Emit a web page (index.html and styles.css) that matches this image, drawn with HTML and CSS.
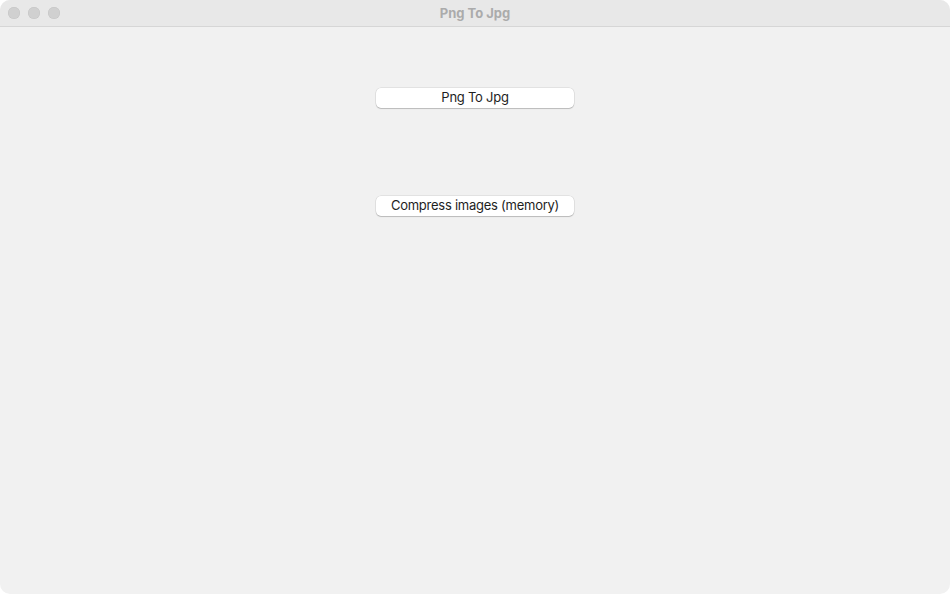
FILE: index.html
```html
<!DOCTYPE html>
<html>
<head>
<meta charset="utf-8">
<link rel="stylesheet" href="styles.css">
</head>
<body>
<div class="window">
  <div class="titlebar">
    <div class="lights">
      <span class="light"></span>
      <span class="light"></span>
      <span class="light"></span>
    </div>
    <div class="title">Png To Jpg</div>
  </div>
  <div class="content">
    <button class="btn btn-first">Png To Jpg</button>
    <button class="btn btn-second">Compress images (memory)</button>
  </div>
</div>
</body>
</html>
```
FILE: styles.css
```css
html, body {
  margin: 0;
  padding: 0;
  background: #ffffff;
}
body {
  width: 950px;
  height: 594px;
  font-family: Inter, "Liberation Sans", sans-serif;
}
.window {
  width: 950px;
  height: 594px;
  background: #f1f1f1;
  border-radius: 10px;
  overflow: hidden;
  display: flex;
  flex-direction: column;
}
.titlebar {
  height: 26px;
  flex: none;
  background: #e8e8e8;
  border-bottom: 1px solid #d6d6d6;
  display: flex;
  align-items: center;
  position: relative;
}
.lights {
  display: flex;
  gap: 8px;
  padding-left: 8px;
}
.light {
  width: 12px;
  height: 12px;
  border-radius: 50%;
  background: #d0d0d0;
  box-shadow: inset 0 0 0 0.5px #c4c4c4;
}
.title {
  position: absolute;
  left: 0;
  right: 0;
  top: 0;
  height: 26px;
  line-height: 26px;
  text-align: center;
  font-size: 13px;
  font-weight: 700;
  color: #ababab;
}
.content {
  flex: 1;
  display: flex;
  flex-direction: column;
  align-items: center;
  padding-top: 61px;
}
.btn {
  width: 198px;
  height: 20px;
  padding: 0 0 2px 0;
  margin: 0;
  background: #ffffff;
  border: none;
  border-radius: 5px;
  box-shadow: 0 0 0 0.5px rgba(0,0,0,0.12), 0 1px 1px rgba(0,0,0,0.18);
  font-family: Inter, "Liberation Sans", sans-serif;
  font-size: 13px;
  letter-spacing: -0.25px;
  color: #1e1e1e;
  line-height: 16px;
  text-align: center;
}
.btn-second {
  margin-top: 88px;
}
```
